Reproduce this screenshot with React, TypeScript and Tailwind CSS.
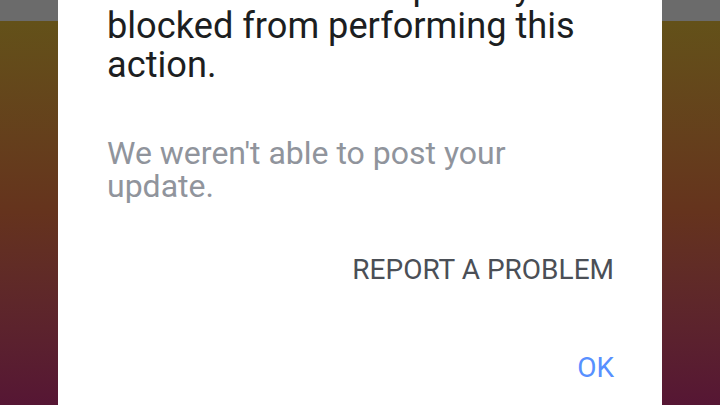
import React from 'react'

const App = () => {
  return (
    <div className="relative w-[720px] h-[405px] overflow-hidden flex flex-col font-['Roboto',sans-serif]">
      <div className="h-[21px] bg-[#6b6b6b]" />
      <div className="flex-1 bg-gradient-to-b from-[#635119] via-[#65331d] to-[#561634]" />

      <div className="absolute left-[58px] top-[-33px] w-[604px] h-[480px] bg-white pl-[49px] pr-[48px]">
        <p className="text-[36.2px] leading-[39px] text-[#1c1e21]">
          You have been temporarily
          <br />
          blocked from performing this
          <br />
          action.
        </p>
        <p className="mt-[53px] text-[32px] leading-[33px] text-[#90949c]">
          We weren't able to post your
          <br />
          update.
        </p>
        <div className="mt-[53px] flex flex-col items-end gap-[70px]">
          <button className="text-[28px] leading-[28px] text-[#4b4f56]">REPORT A PROBLEM</button>
          <button className="text-[28px] leading-[28px] text-[#5890ff]">OK</button>
        </div>
      </div>
    </div>
  )
}

export default App
